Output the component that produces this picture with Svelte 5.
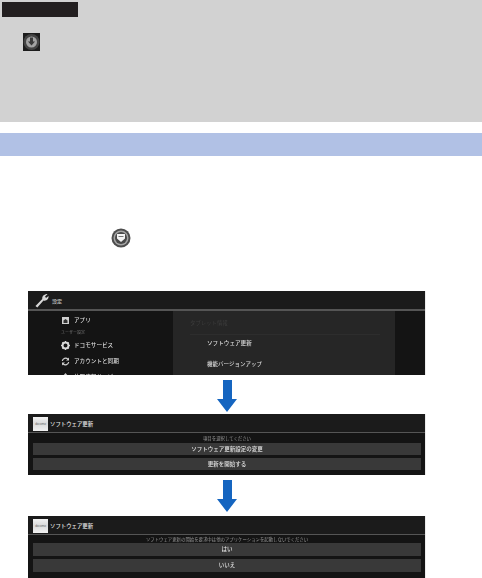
<script>
  const menu = [
    { label: 'アプリ', kind: 'app' },
    { label: 'ユーザー設定', kind: 'head' },
    { label: 'ドコモサービス', kind: 'gear' },
    { label: 'アカウントと同期', kind: 'sync' },
    { label: '位置情報サービス', kind: 'pin' }
  ];
  const dialogs = {
    settings: { kind: 'settings-dlg', prompt: '項目を選択してください', buttons: ['ソフトウェア更新設定の変更', '更新を開始する'] },
    confirm: {
      kind: 'confirm-dlg',
      prompt: 'ソフトウェア更新の開始を要求中は他のアプリケーションを起動しないでください',
      buttons: ['はい', 'いいえ']
    }
  };
</script>

{#snippet arrow(gap)}
  <svg class="arrow {gap}" width="20" height="32" viewBox="0 0 20 32">
    <path d="M6 0h9v19h5L10 32 0 19h6z" fill="#1565c0" />
  </svg>
{/snippet}

{#snippet dialog(d)}
  <div class="screen dialog {d.kind}">
    <div class="dlg-head">
      <div class="logo">docomo</div>
      <span>ソフトウェア更新</span>
    </div>
    <div class="dlg-body">
      <p class="prompt">{d.prompt}</p>
      {#each d.buttons as b}
        <div class="dlg-btn">{b}</div>
      {/each}
    </div>
  </div>
{/snippet}

{#snippet menuIcon(kind)}
  <svg width="9" height="9" viewBox="0 0 9 9">
    {#if kind === 'app'}
      <rect x="1" y="1" width="7" height="7" fill="#d0d0d0" />
      <path d="M2.500 7V4.500L4.500 3l2 1.500V7z" fill="#333" />
    {:else if kind === 'gear'}
      <circle cx="4.500" cy="4.500" r="3" fill="none" stroke="#d8d8d8" stroke-width="2" />
      <path d="M4.500 0v9M0 4.500h9M1.300 1.300l6.400 6.400M7.700 1.300 1.300 7.700" stroke="#d8d8d8" stroke-width="1" stroke-dasharray="1.500 6" />
    {:else if kind === 'sync'}
      <path d="M1.300 4a3.300 3.300 0 0 1 5.600-1.800M7.700 5a3.300 3.300 0 0 1-5.600 1.800" fill="none" stroke="#d0d0d0" stroke-width="1.200" />
      <path d="M8 .5v3H5zM1 8.500v-3h3z" fill="#d0d0d0" />
    {:else}
      <path d="M4.500 0 8 4 4.500 9 1 4z" fill="#c8c8c8" />
    {/if}
  </svg>
{/snippet}

<div class="page">
  <section class="notice">
    <div class="notice-title"></div>
    <div class="notice-icon">
      <svg width="17" height="18" viewBox="0 0 17 18">
        <rect width="17" height="18" fill="#1c1c1c" />
        <circle cx="8.500" cy="9" r="8" fill="#444" />
        <circle cx="8.500" cy="9" r="5.500" fill="#a2a2a2" />
        <path d="M7 4.500h3v4h2L8.500 12.500 5 8.500h2z" fill="#3a3a3a" />
      </svg>
    </div>
  </section>

  <div class="band"></div>

  <div class="update-icon">
    <svg width="20" height="22" viewBox="0 0 20 22">
      <circle cx="10" cy="11" r="9.500" fill="#4d4d4d" />
      <circle cx="10" cy="11" r="7.500" fill="#a4a4a4" />
      <circle cx="10" cy="11" r="6" fill="#484848" />
      <path d="M6 7h8v4.500L10 15l-4-3.500z" fill="#f4f4f4" />
      <path d="M7.500 9.500h5" stroke="#777" stroke-width="1" />
    </svg>
  </div>

  <div class="steps">
    <div class="screen settings">
      <div class="set-head">
        <svg width="14" height="15" viewBox="0 0 15 15">
          <path d="M.5 13.500 7.800 6C7.300 3 9.500.5 13.500.5L10.800 3.300l1 1.500L14.500 2.800c.4 3.400-2.500 5.700-5.400 4.800L2.500 15z" fill="#d6d6d6" />
        </svg>
        <span>設定</span>
      </div>
      <div class="set-body">
        <ul class="set-menu">
          {#each menu as item}
            <li class={item.kind}>
              {#if item.kind !== 'head'}{@render menuIcon(item.kind)}{/if}
              {item.label}
            </li>
          {/each}
        </ul>
        <div class="set-detail">
          <div class="detail-title">タブレット情報</div>
          <div class="detail-row big">ソフトウェア更新</div>
          <div class="detail-row">機能バージョンアップ</div>
        </div>
      </div>
    </div>

    {@render arrow('first')}
    {@render dialog(dialogs.settings)}
    {@render arrow('second')}
    {@render dialog(dialogs.confirm)}
  </div>
</div>

<style>
  :global(body) {
    margin: 0;
    background: #fff;
  }
  .page {
    width: 482px;
    height: 578px;
    overflow: hidden;
    font-family: "Noto Sans CJK JP", "Liberation Sans", sans-serif;
  }
  .notice {
    height: 122px;
    box-sizing: border-box;
    padding: 2px;
    background: #d2d2d2;
  }
  .notice-title {
    width: 76px;
    height: 15px;
    background: #231f20;
  }
  .notice-icon {
    margin: 16px 0 0 21px;
    line-height: 0;
  }
  .band {
    height: 23px;
    margin-top: 11px;
    background: #b1c1e5;
  }
  .update-icon {
    margin: 71px 0 0 111px;
    line-height: 0;
  }
  .steps {
    display: flex;
    flex-direction: column;
    align-items: center;
    width: 454px;
    margin: 42px 0 0 0;
  }
  .arrow {
    flex: none;
    margin-top: 5px;
  }
  .arrow.first {
    margin-bottom: 2px;
  }
  .arrow.second {
    margin-bottom: 4px;
  }
  .screen {
    align-self: flex-start;
    width: 397px;
    margin-left: 28px;
    box-sizing: border-box;
    background: #161616;
    color: #d8d8d8;
    overflow: hidden;
    box-shadow: 1px 0 0 #ececec;
  }

  /* settings screen */
  .settings {
    height: 84px;
  }
  .set-head {
    display: flex;
    align-items: center;
    gap: 3px;
    height: 18px;
    padding-left: 7px;
    background: #1b1b1b;
    border-bottom: 2px solid #555;
    font-size: 5px;
    font-weight: 500;
    color: #c4c4c4;
  }
  .set-body {
    display: flex;
    height: 64px;
    overflow: hidden;
    background: #141414;
  }
  .set-menu {
    width: 118px;
    flex: none;
    margin: 0;
    padding: 1px 0 0 33px;
    box-sizing: border-box;
    list-style: none;
    font-size: 5.600px;
    font-weight: 500;
    line-height: 15px;
    color: #dcdcdc;
    filter: blur(.35px);
  }
  .set-menu li {
    display: flex;
    align-items: center;
    gap: 4px;
    height: 16px;
    white-space: nowrap;
  }
  .set-menu li.head {
    height: 9px;
    font-size: 4px;
    font-weight: 400;
    color: #777;
  }
  .set-detail {
    width: 222px;
    height: 64px;
    margin-left: 27px;
    padding: 7px 0 0 17px;
    box-sizing: border-box;
    background: #262626;
    filter: blur(.35px);
  }
  .detail-title {
    height: 16px;
    font-size: 5.400px;
    line-height: 10px;
    color: #3c3c3c;
    border-bottom: 1px solid #2d2d2d;
    width: 190px;
  }
  .detail-row {
    height: 21px;
    padding-left: 17px;
    font-size: 5.500px;
    font-weight: 500;
    line-height: 21px;
    white-space: nowrap;
  }
  .detail-row.big {
    height: 17px;
    margin-bottom: 2px;
    font-size: 5.600px;
    line-height: 17px;
  }

  /* dialogs */
  .dialog {
    flex: none;
    height: 61px;
    background: #141414;
  }
  .dlg-head {
    display: flex;
    align-items: center;
    gap: 2px;
    height: 19px;
    padding: 1px 0 0 5px;
    box-sizing: border-box;
    background: #1b1b1b;
    border-bottom: 1px solid #555;
    font-size: 5.400px;
    font-weight: 500;
    color: #e4e4e4;
  }
  .logo {
    width: 15px;
    height: 14px;
    background: linear-gradient(#f2f2f2, #dadada 45%, #f0f0f0);
    color: #666;
    font: 3px/14px "Liberation Sans", sans-serif;
    text-align: center;
    overflow: hidden;
  }
  .dlg-body {
    padding: 0 4px 0 5px;
    filter: blur(.3px);
  }
  .prompt {
    height: 10px;
    margin: 0;
    font-size: 4.400px;
    line-height: 10px;
    text-align: center;
    color: #999;
    white-space: nowrap;
  }
  .dlg-btn {
    height: 12px;
    margin-bottom: 3px;
    background: #393939;
    font-size: 5.500px;
    font-weight: 500;
    line-height: 12px;
    text-align: center;
    color: #e0e0e0;
  }
  .confirm-dlg {
    height: 62px;
  }
  .confirm-dlg .prompt {
    height: 8px;
    line-height: 9px;
  }
  .confirm-dlg .dlg-btn {
    height: 13px;
    line-height: 13px;
    margin-bottom: 3px;
  }
</style>
